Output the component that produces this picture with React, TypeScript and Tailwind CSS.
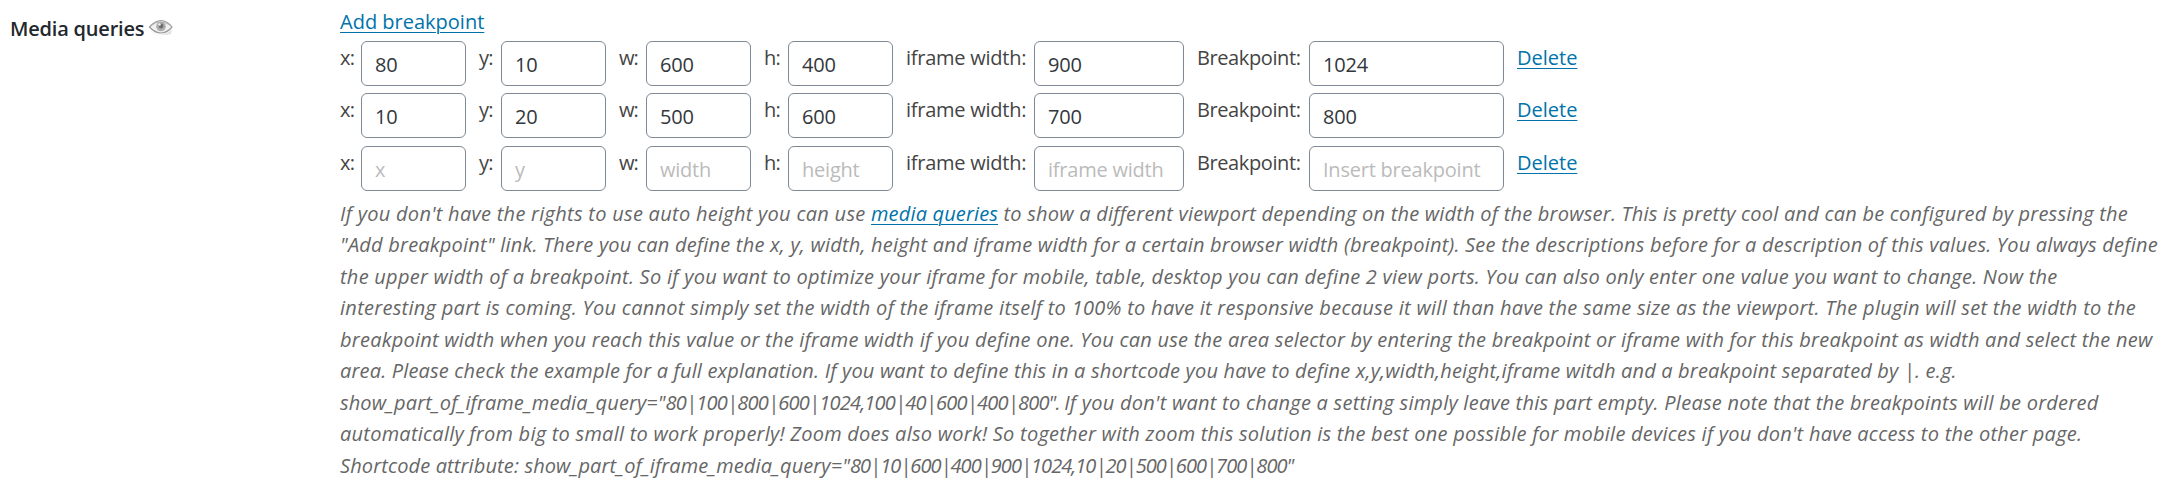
import React from 'react';

type Field = {
  label: string;
  placeholder: string;
  labelClass: string;
  inputClass: string;
}

const fields: Field[] = [
  { label: 'x:', placeholder: 'x', labelClass: 'w-[21px] tracking-[-0.8px]', inputClass: 'w-[105px]' },
  { label: 'y:', placeholder: 'y', labelClass: 'ml-[13px] w-[22px] tracking-[-0.7px]', inputClass: 'w-[105px]' },
  { label: 'w:', placeholder: 'width', labelClass: 'ml-[13px] w-[27px] tracking-[-0.9px]', inputClass: 'w-[105px]' },
  { label: 'h:', placeholder: 'height', labelClass: 'ml-[13px] w-[24px] tracking-[-0.7px]', inputClass: 'w-[105px]' },
  { label: 'iframe width:', placeholder: 'iframe width', labelClass: 'ml-[13px] w-[128px] tracking-[-0.25px]', inputClass: 'w-[150px]' },
  { label: 'Breakpoint:', placeholder: 'Insert breakpoint', labelClass: 'ml-[13px] w-[112px] tracking-[-0.4px]', inputClass: 'w-[195px]' },
];

const rows = [
  ['80', '10', '600', '400', '900', '1024'],
  ['10', '20', '500', '600', '700', '800'],
  ['', '', '', '', '', ''],
];

const EyeIcon = () => (
  <svg width="26" height="18" viewBox="0 0 26 18" fill="none" className="ml-1 mt-[9px] shrink-0">
    <path d="M2 11 Q13 21 24 10 L23 15 Q13 18 5 14 Z" fill="#e4e4e4" />
    <path d="M1.5 8 Q7 1.5 13 1.5 Q19 1.5 24 8 Q19 14 13 14 Q7 14 1.5 8 Z" fill="#f1f1f1" stroke="#999" strokeWidth="1.2" />
    <path d="M3 6.5 Q12 -0.5 23 6.5" stroke="#b0b0b0" strokeWidth="1.2" />
    <circle cx="13" cy="7.5" r="4.8" fill="#adadad" />
    <circle cx="13" cy="7" r="2.4" fill="#6c6c6c" />
    <circle cx="11.5" cy="5.5" r="1.3" fill="#eeeeee" />
  </svg>
);

const Link = ({ children, className = '' }: { children: React.ReactNode; className?: string }) => (
  <a href="#" className={`text-[#0073aa] underline decoration-[1px] underline-offset-[3px] ${className}`}>{children}</a>
);

const App = () => {
  return (
    <div className="flex h-[503px] w-[2176px] bg-white font-['Open_Sans',sans-serif] text-[20px] text-[#444]">
      <div className="flex w-[340px] shrink-0 items-start pl-[10px] pt-[10px]">
        <span className="font-semibold leading-[37px] tracking-[-0.2px] text-[#23282d]">Media queries</span>
        <EyeIcon />
      </div>

      <div className="pt-[5.5px]">
        <div className="h-[35.25px] leading-[32px]"><Link>Add breakpoint</Link></div>

        <div className="flex flex-col gap-[7.5px]">
          {rows.map((row, i) => (
            <div key={i} className="flex h-[45px] items-start">
              {fields.map((field, j) => (
                <label key={field.label} className="flex items-start">
                  <span className={`shrink-0 whitespace-nowrap leading-[33.5px] ${field.labelClass}`}>{field.label}</span>
                  <input
                    type="text"
                    defaultValue={row[j]}
                    placeholder={field.placeholder}
                    className={`h-[45px] rounded-[6px] border border-[#7e8993] bg-white pl-[13px] pt-[2px] tracking-[-0.22px] text-[#32373c] placeholder:text-[#bbb] ${field.inputClass}`}
                  />
                </label>
              ))}
              <Link className="ml-[13px] leading-[33.5px]">Delete</Link>
            </div>
          ))}
        </div>

        <p className="mt-[6.75px] whitespace-nowrap italic leading-[31.5px] text-[#666]">
          <span className="block tracking-[0.22px]">
            <span className="tracking-[0.28px]">If you don't have the rights to use auto height you can use </span>
            <Link className="tracking-[0.15px]">media queries</Link>
            {' '}to show a different viewport depending on the width of the browser. This is pretty cool and can be configured by pressing the
          </span>
          <span className="block tracking-[0.215px]">"Add breakpoint" link. There you can define the x, y, width, height and iframe width for a certain browser width (breakpoint). See the descriptions before for a description of this values. You always define</span>
          <span className="block tracking-[0.259px]">the upper width of a breakpoint. So if you want to optimize your iframe for mobile, table, desktop you can define 2 view ports. You can also only enter one value you want to change. Now the</span>
          <span className="block tracking-[0.281px]">interesting part is coming. You cannot simply set the width of the iframe itself to 100% to have it responsive because it will than have the same size as the viewport. The plugin will set the width to the</span>
          <span className="block tracking-[0.238px]">breakpoint width when you reach this value or the iframe width if you define one. You can use the area selector by entering the breakpoint or iframe with for this breakpoint as width and select the new</span>
          <span className="block tracking-[0.173px]">area. Please check the example for a full explanation. If you want to define this in a shortcode you have to define x,y,width,height,iframe witdh and a breakpoint separated by |. e.g.</span>
          <span className="block tracking-[0.25px]">
            <span className="tracking-[0.1px]">show_part_of_iframe_media_query="</span>
            <span className="tracking-[-0.77px]">80|100|800|600|1024,100|40|600|400|800". </span>
            If you don't want to change a setting simply leave this part empty. Please note that the breakpoints will be ordered
          </span>
          <span className="block tracking-[0.245px]">automatically from big to small to work properly! Zoom does also work! So together with zoom this solution is the best one possible for mobile devices if you don't have access to the other page.</span>
          <span className="block tracking-[0.1px]">
            <span className="tracking-[0.13px]">Shortcode attribute: </span>
            show_part_of_iframe_media_query="
            <span className="tracking-[-0.95px]">80|10|600|400|900|1024,10|20|500|600|700|800"</span>
          </span>
        </p>
      </div>
    </div>
  );
};

export default App;
